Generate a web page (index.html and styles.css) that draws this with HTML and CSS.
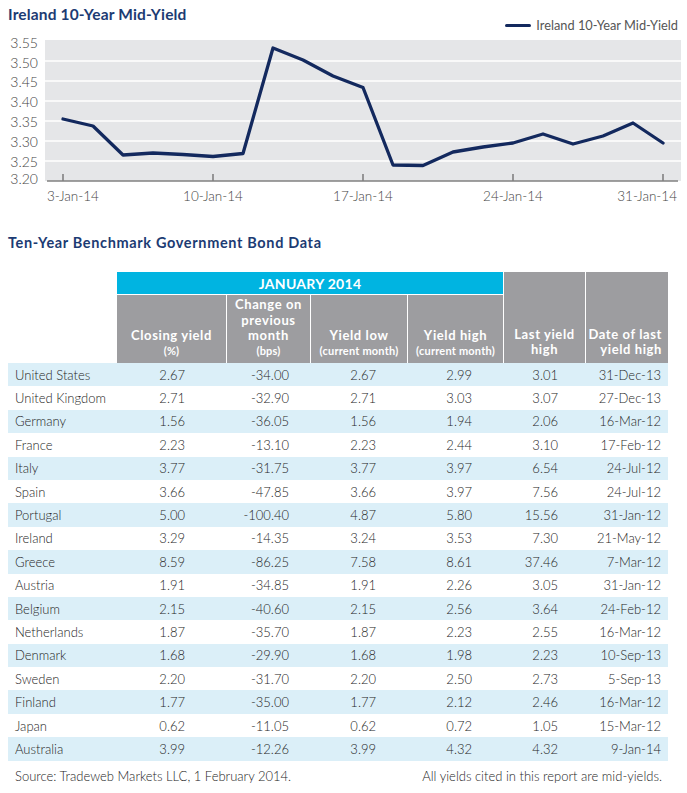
FILE: index.html
```html
<!DOCTYPE html>
<html>
<head>
<meta charset="utf-8">
<title>Ireland 10-Year Mid-Yield</title>
<link rel="stylesheet" href="styles.css">
</head>
<body>
<div class="page">
  <div class="chart-head">
    <h1 class="title">Ireland 10-Year Mid-Yield</h1>
    <div class="legend"><span class="legend-line"></span><span class="legend-text">Ireland 10-Year Mid-Yield</span></div>
  </div>
  <svg class="chart" width="687" height="182" viewBox="0 32 687 182" xmlns="http://www.w3.org/2000/svg">
    <rect x="45" y="40" width="636" height="141" fill="#e5e6e8"/>
    <g stroke="#ffffff" stroke-width="1.6">
      <line x1="45" y1="61" x2="681" y2="61"/>
      <line x1="45" y1="81" x2="681" y2="81"/>
      <line x1="45" y1="101" x2="681" y2="101"/>
      <line x1="45" y1="121" x2="681" y2="121"/>
      <line x1="45" y1="141" x2="681" y2="141"/>
      <line x1="45" y1="161" x2="681" y2="161"/>
    </g>
    <g stroke="#808080" stroke-width="1.6">
      <line x1="47" y1="181" x2="678" y2="181"/>
      <line x1="63" y1="174" x2="63" y2="181"/>
      <line x1="213" y1="174" x2="213" y2="181"/>
      <line x1="363" y1="174" x2="363" y2="181"/>
      <line x1="513" y1="174" x2="513" y2="181"/>
      <line x1="663" y1="174" x2="663" y2="181"/>
    </g>
    <g class="ylab" text-anchor="end">
      <text x="38" y="48">3.55</text>
      <text x="38" y="67.5">3.50</text>
      <text x="38" y="87">3.45</text>
      <text x="38" y="106.5">3.40</text>
      <text x="38" y="127">3.35</text>
      <text x="38" y="147">3.30</text>
      <text x="38" y="166.5">3.25</text>
      <text x="38" y="184">3.20</text>
    </g>
    <g class="xlab">
      <text x="47" y="201">3-Jan-14</text>
      <text x="213" y="201" text-anchor="middle">10-Jan-14</text>
      <text x="363" y="201" text-anchor="middle">17-Jan-14</text>
      <text x="513" y="201" text-anchor="middle">24-Jan-14</text>
      <text x="677" y="201" text-anchor="end">31-Jan-14</text>
    </g>
    <polyline fill="none" stroke="#13295e" stroke-width="3.3" stroke-linejoin="round" stroke-linecap="round"
      points="63,119 93,126 123,155 153,153 183,154.5 213,156.5 243,153.5 273,48 303,60 333,76 363,87.5 393,165 423,165.5 453,152 483,147 513,143 543,134 573,144 603,136 633,123 663,143"/>
  </svg>

  <h2 class="subtitle">Ten-Year Benchmark Government Bond Data</h2>

  <table class="bonds">
    <colgroup>
      <col class="c-country">
      <col class="c-close">
      <col class="c-change">
      <col class="c-low">
      <col class="c-high">
      <col class="c-last">
      <col class="c-date">
    </colgroup>
    <thead>
      <tr class="row-month">
        <th class="blank" rowspan="2"></th>
        <th class="month" colspan="4">JANUARY 2014</th>
        <th class="hd hd-plain sep" rowspan="2">Last yield<br>high</th>
        <th class="hd hd-plain hd-date sep" rowspan="2">Date of last<br>yield high</th>
      </tr>
      <tr class="row-sub">
        <th class="hd">Closing yield<small>(%)</small></th>
        <th class="hd sep">Change on<br>previous<br>month<small>(bps)</small></th>
        <th class="hd sep">Yield low<small>(current month)</small></th>
        <th class="hd sep">Yield high<small>(current month)</small></th>
      </tr>
    </thead>
    <tbody>
      <tr><td>United States</td><td>2.67</td><td>-34.00</td><td>2.67</td><td>2.99</td><td>3.01</td><td>31-Dec-13</td></tr>
      <tr><td>United Kingdom</td><td>2.71</td><td>-32.90</td><td>2.71</td><td>3.03</td><td>3.07</td><td>27-Dec-13</td></tr>
      <tr><td>Germany</td><td>1.56</td><td>-36.05</td><td>1.56</td><td>1.94</td><td>2.06</td><td>16-Mar-12</td></tr>
      <tr><td>France</td><td>2.23</td><td>-13.10</td><td>2.23</td><td>2.44</td><td>3.10</td><td>17-Feb-12</td></tr>
      <tr><td>Italy</td><td>3.77</td><td>-31.75</td><td>3.77</td><td>3.97</td><td>6.54</td><td>24-Jul-12</td></tr>
      <tr><td>Spain</td><td>3.66</td><td>-47.85</td><td>3.66</td><td>3.97</td><td>7.56</td><td>24-Jul-12</td></tr>
      <tr><td>Portugal</td><td>5.00</td><td>-100.40</td><td>4.87</td><td>5.80</td><td>15.56</td><td>31-Jan-12</td></tr>
      <tr><td>Ireland</td><td>3.29</td><td>-14.35</td><td>3.24</td><td>3.53</td><td>7.30</td><td>21-May-12</td></tr>
      <tr><td>Greece</td><td>8.59</td><td>-86.25</td><td>7.58</td><td>8.61</td><td>37.46</td><td>7-Mar-12</td></tr>
      <tr><td>Austria</td><td>1.91</td><td>-34.85</td><td>1.91</td><td>2.26</td><td>3.05</td><td>31-Jan-12</td></tr>
      <tr><td>Belgium</td><td>2.15</td><td>-40.60</td><td>2.15</td><td>2.56</td><td>3.64</td><td>24-Feb-12</td></tr>
      <tr><td>Netherlands</td><td>1.87</td><td>-35.70</td><td>1.87</td><td>2.23</td><td>2.55</td><td>16-Mar-12</td></tr>
      <tr><td>Denmark</td><td>1.68</td><td>-29.90</td><td>1.68</td><td>1.98</td><td>2.23</td><td>10-Sep-13</td></tr>
      <tr><td>Sweden</td><td>2.20</td><td>-31.70</td><td>2.20</td><td>2.50</td><td>2.73</td><td>5-Sep-13</td></tr>
      <tr><td>Finland</td><td>1.77</td><td>-35.00</td><td>1.77</td><td>2.12</td><td>2.46</td><td>16-Mar-12</td></tr>
      <tr><td>Japan</td><td>0.62</td><td>-11.05</td><td>0.62</td><td>0.72</td><td>1.05</td><td>15-Mar-12</td></tr>
      <tr><td>Australia</td><td>3.99</td><td>-12.26</td><td>3.99</td><td>4.32</td><td>4.32</td><td>9-Jan-14</td></tr>
    </tbody>
  </table>

  <div class="foot">
    <span>Source: Tradeweb Markets LLC, 1 February 2014.</span>
    <span>All yields cited in this report are mid-yields.</span>
  </div>
</div>
</body>
</html>
```

FILE: styles.css
```css
* { box-sizing: border-box; }

html, body {
  margin: 0;
  padding: 0;
  background: #ffffff;
}

.page {
  width: 687px;
  font-family: Lato, "Open Sans", "Liberation Sans", sans-serif;
  color: #3c3c3c;
}

.chart-head {
  display: flex;
  justify-content: space-between;
  height: 32px;
  padding: 0 9px 0 8px;
}

.title {
  margin: 0;
  padding-top: 4px;
  font-size: 15.5px;
  line-height: 20px;
  font-weight: 700;
  letter-spacing: 0.15px;
  color: #1c3b73;
}

.legend {
  align-self: flex-end;
  display: flex;
  align-items: center;
  gap: 5px;
  height: 14px;
  font-size: 12.8px;
  line-height: 14px;
  color: #555555;
}

.legend-line {
  display: block;
  width: 26px;
  height: 3px;
  border-radius: 2px;
  background: #13295e;
}

.chart {
  display: block;
}

.ylab text {
  font-family: Lato, "Open Sans", sans-serif;
  font-size: 14px;
  font-weight: 300;
  fill: #444444;
}

.xlab text {
  font-family: Lato, "Open Sans", sans-serif;
  font-size: 13.5px;
  font-weight: 300;
  fill: #444444;
}

.subtitle {
  margin: 19px 0 19px;
  padding-left: 8px;
  font-size: 14.5px;
  line-height: 20px;
  font-weight: 700;
  letter-spacing: 0.65px;
  color: #1c3b73;
}

.bonds {
  margin-left: 8px;
  width: 660px;
  table-layout: fixed;
  border-collapse: separate;
  border-spacing: 0;
}

.c-country { width: 109px; }
.c-close { width: 109px; }
.c-change { width: 84px; }
.c-low { width: 97px; }
.c-high { width: 96px; }
.c-last { width: 82px; }
.c-date { width: 83px; }

.bonds th {
  padding: 0;
  color: #ffffff;
  font-weight: 700;
  font-size: 13px;
  line-height: 15.6px;
  white-space: nowrap;
}

.bonds .blank {
  background: #ffffff;
}

.bonds .month {
  height: 23px;
  background: #00b4e1;
  border-bottom: 1px solid #ffffff;
  text-align: center;
  vertical-align: middle;
  font-size: 14px;
  line-height: 17px;
  letter-spacing: 0.3px;
}

.bonds .row-sub th {
  height: 68px;
}

.bonds .hd {
  background: #9d9da0;
  text-align: center;
  vertical-align: bottom;
  padding: 0 2px 6px;
  letter-spacing: 0.6px;
}

.bonds .hd-plain {
  padding-bottom: 5px;
}

.bonds .hd-date {
  text-align: right;
  padding-right: 6px;
}

.bonds th.sep {
  border-left: 1px solid #ffffff;
}

.bonds .hd small {
  display: block;
  font-size: 11px;
  line-height: 13.2px;
  font-weight: 700;
  letter-spacing: 0.2px;
}

.bonds td {
  height: 23.4px;
  padding: 0;
  font-size: 13px;
  font-weight: 300;
  color: #262626;
  text-align: right;
  vertical-align: middle;
  white-space: nowrap;
}

.bonds tbody tr:nth-child(odd) td {
  background: #dbeff8;
}

.bonds td:nth-child(1) { text-align: left; padding-left: 7px; }
.bonds td:nth-child(2) { padding-right: 41px; }
.bonds td:nth-child(3) { padding-right: 21px; }
.bonds td:nth-child(4) { padding-right: 31px; }
.bonds td:nth-child(5) { padding-right: 31px; }
.bonds td:nth-child(6) { padding-right: 27px; }
.bonds td:nth-child(7) { padding-right: 7px; }

.foot {
  display: flex;
  justify-content: space-between;
  width: 660px;
  margin-left: 8px;
  margin-top: 7px;
  padding: 0 6px 0 7px;
  font-size: 13px;
  font-weight: 300;
  line-height: 16px;
  color: #262626;
}
```
